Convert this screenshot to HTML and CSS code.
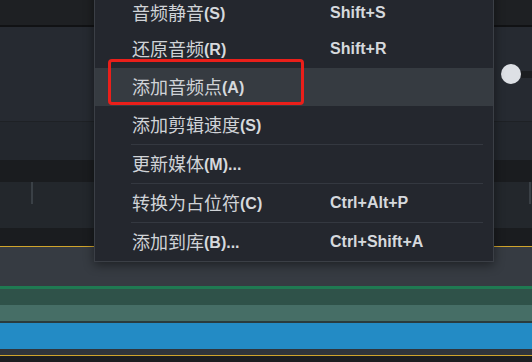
FILE: index.html
```html
<!DOCTYPE html>
<html lang="zh-CN">
<head>
<meta charset="utf-8">
<title>Context menu</title>
<link rel="stylesheet" href="styles.css">
</head>
<body>
<div class="stage">
  <div class="topbar"></div>
  <div class="topline"></div>
  <div class="panel">
    <div class="slider"><span class="knob"></span><span class="rail"></span></div>
  </div>
  <div class="panel-line"></div>
  <div class="panel2"></div>
  <div class="dark-band"></div>
  <div class="ruler"><span class="tick"></span><span class="tick"></span></div>
  <div class="dark-band2"></div>
  <div class="gold"></div>
  <div class="track-gray"></div>
  <div class="green-line"></div>
  <div class="green-dark"></div>
  <div class="green-light"></div>
  <div class="clip-sep"></div>
  <div class="blue"></div>
  <div class="gray-strip"></div>
  <div class="gold"></div>
  <div class="bottom"></div>

  <div class="menu">
    <div class="item first"><span class="label">音频静音<span class="lat">(S)</span></span><span class="sc">Shift+S</span></div>
    <div class="item"><span class="label">还原音频<span class="lat">(R)</span></span><span class="sc">Shift+R</span></div>
    <div class="item active"><span class="label">添加音频点<span class="lat">(A)</span></span><span class="sc"></span></div>
    <div class="item"><span class="label">添加剪辑速度<span class="lat">(S)</span></span><span class="sc"></span></div>
    <div class="sep"></div>
    <div class="item"><span class="label">更新媒体<span class="lat">(M)...</span></span><span class="sc"></span></div>
    <div class="sep"></div>
    <div class="item"><span class="label">转换为占位符<span class="lat">(C)</span></span><span class="sc">Ctrl+Alt+P</span></div>
    <div class="sep"></div>
    <div class="item"><span class="label">添加到库<span class="lat">(B)...</span></span><span class="sc">Ctrl+Shift+A</span></div>
  </div>
  <div class="annot"></div>
</div>
</body>
</html>
```

FILE: styles.css
```css
html, body {
  margin: 0;
  padding: 0;
  background: #1c1e21;
}
.stage {
  position: relative;
  width: 532px;
  height: 362px;
  overflow: hidden;
  display: flex;
  flex-direction: column;
}
.topbar { height: 25px; background: #1e2023; }
.topline { height: 2px; background: #111214; }
.panel {
  height: 94px;
  background: #262a31;
  display: flex;
  justify-content: flex-end;
  align-items: center;
}
.slider { display: flex; align-items: center; }
.knob {
  width: 20px;
  height: 20px;
  border-radius: 50%;
  background: #dde0e5;
}
.rail {
  width: 11px;
  height: 7px;
  background: #1b1d20;
}
.panel-line { height: 1px; background: #1e2125; }
.panel2 { height: 38px; background: #23272d; }
.dark-band { height: 22px; background: #1a1c1f; }
.ruler {
  height: 46px;
  background: #23272c;
  display: flex;
  justify-content: space-between;
  align-items: flex-start;
  padding: 0 1px 0 31px;
}
.tick { width: 2px; height: 22px; background: #3a4046; }
.dark-band2 { height: 18px; background: #1a1c1f; }
.gold { height: 1px; background: #d0a42c; flex-shrink: 0; }
.track-gray { height: 39px; background: #363b42; }
.green-line { height: 3px; background: #1f7a52; }
.green-dark { height: 16px; background: #2f5249; }
.green-light { height: 16px; background: #466e66; }
.clip-sep { height: 2px; background: #2a3b3d; }
.blue { height: 26px; background: #238bc5; }
.gray-strip { height: 6px; background: #30353c; }
.bottom { flex: 1; background: #1c1e21; }

.menu {
  position: absolute;
  left: 94px;
  top: -14px;
  width: 398px;
  background: #24272e;
  border: 1px solid #3b3f46;
  padding: 5px 0 0;
  box-shadow: 0 3px 10px rgba(0, 0, 0, 0.45);
  font-family: "Noto Sans CJK SC", "Liberation Sans", sans-serif;
  color: #d0d3d7;
}
.item {
  box-sizing: border-box;
  height: 38px;
  display: grid;
  grid-template-columns: 198px 1fr;
  align-items: center;
  padding-left: 37px;
  font-size: 18px;
  line-height: 22px;
}
.item.first { padding-top: 4px; }
.item.active { background: #363b41; }
.label { white-space: nowrap; }
.lat, .sc {
  font-family: "Liberation Sans", sans-serif;
  font-weight: bold;
  font-size: 16px;
  line-height: 22px;
  color: #d6d9dd;
}
.label .lat { vertical-align: 1px; }
.sep {
  height: 1px;
  background: #343840;
  margin: 0 10px 0 36px;
}
.annot {
  position: absolute;
  left: 108px;
  top: 59px;
  width: 196px;
  height: 46px;
  box-sizing: border-box;
  border: 3px solid #ea1f1a;
  border-radius: 4px;
}
```
